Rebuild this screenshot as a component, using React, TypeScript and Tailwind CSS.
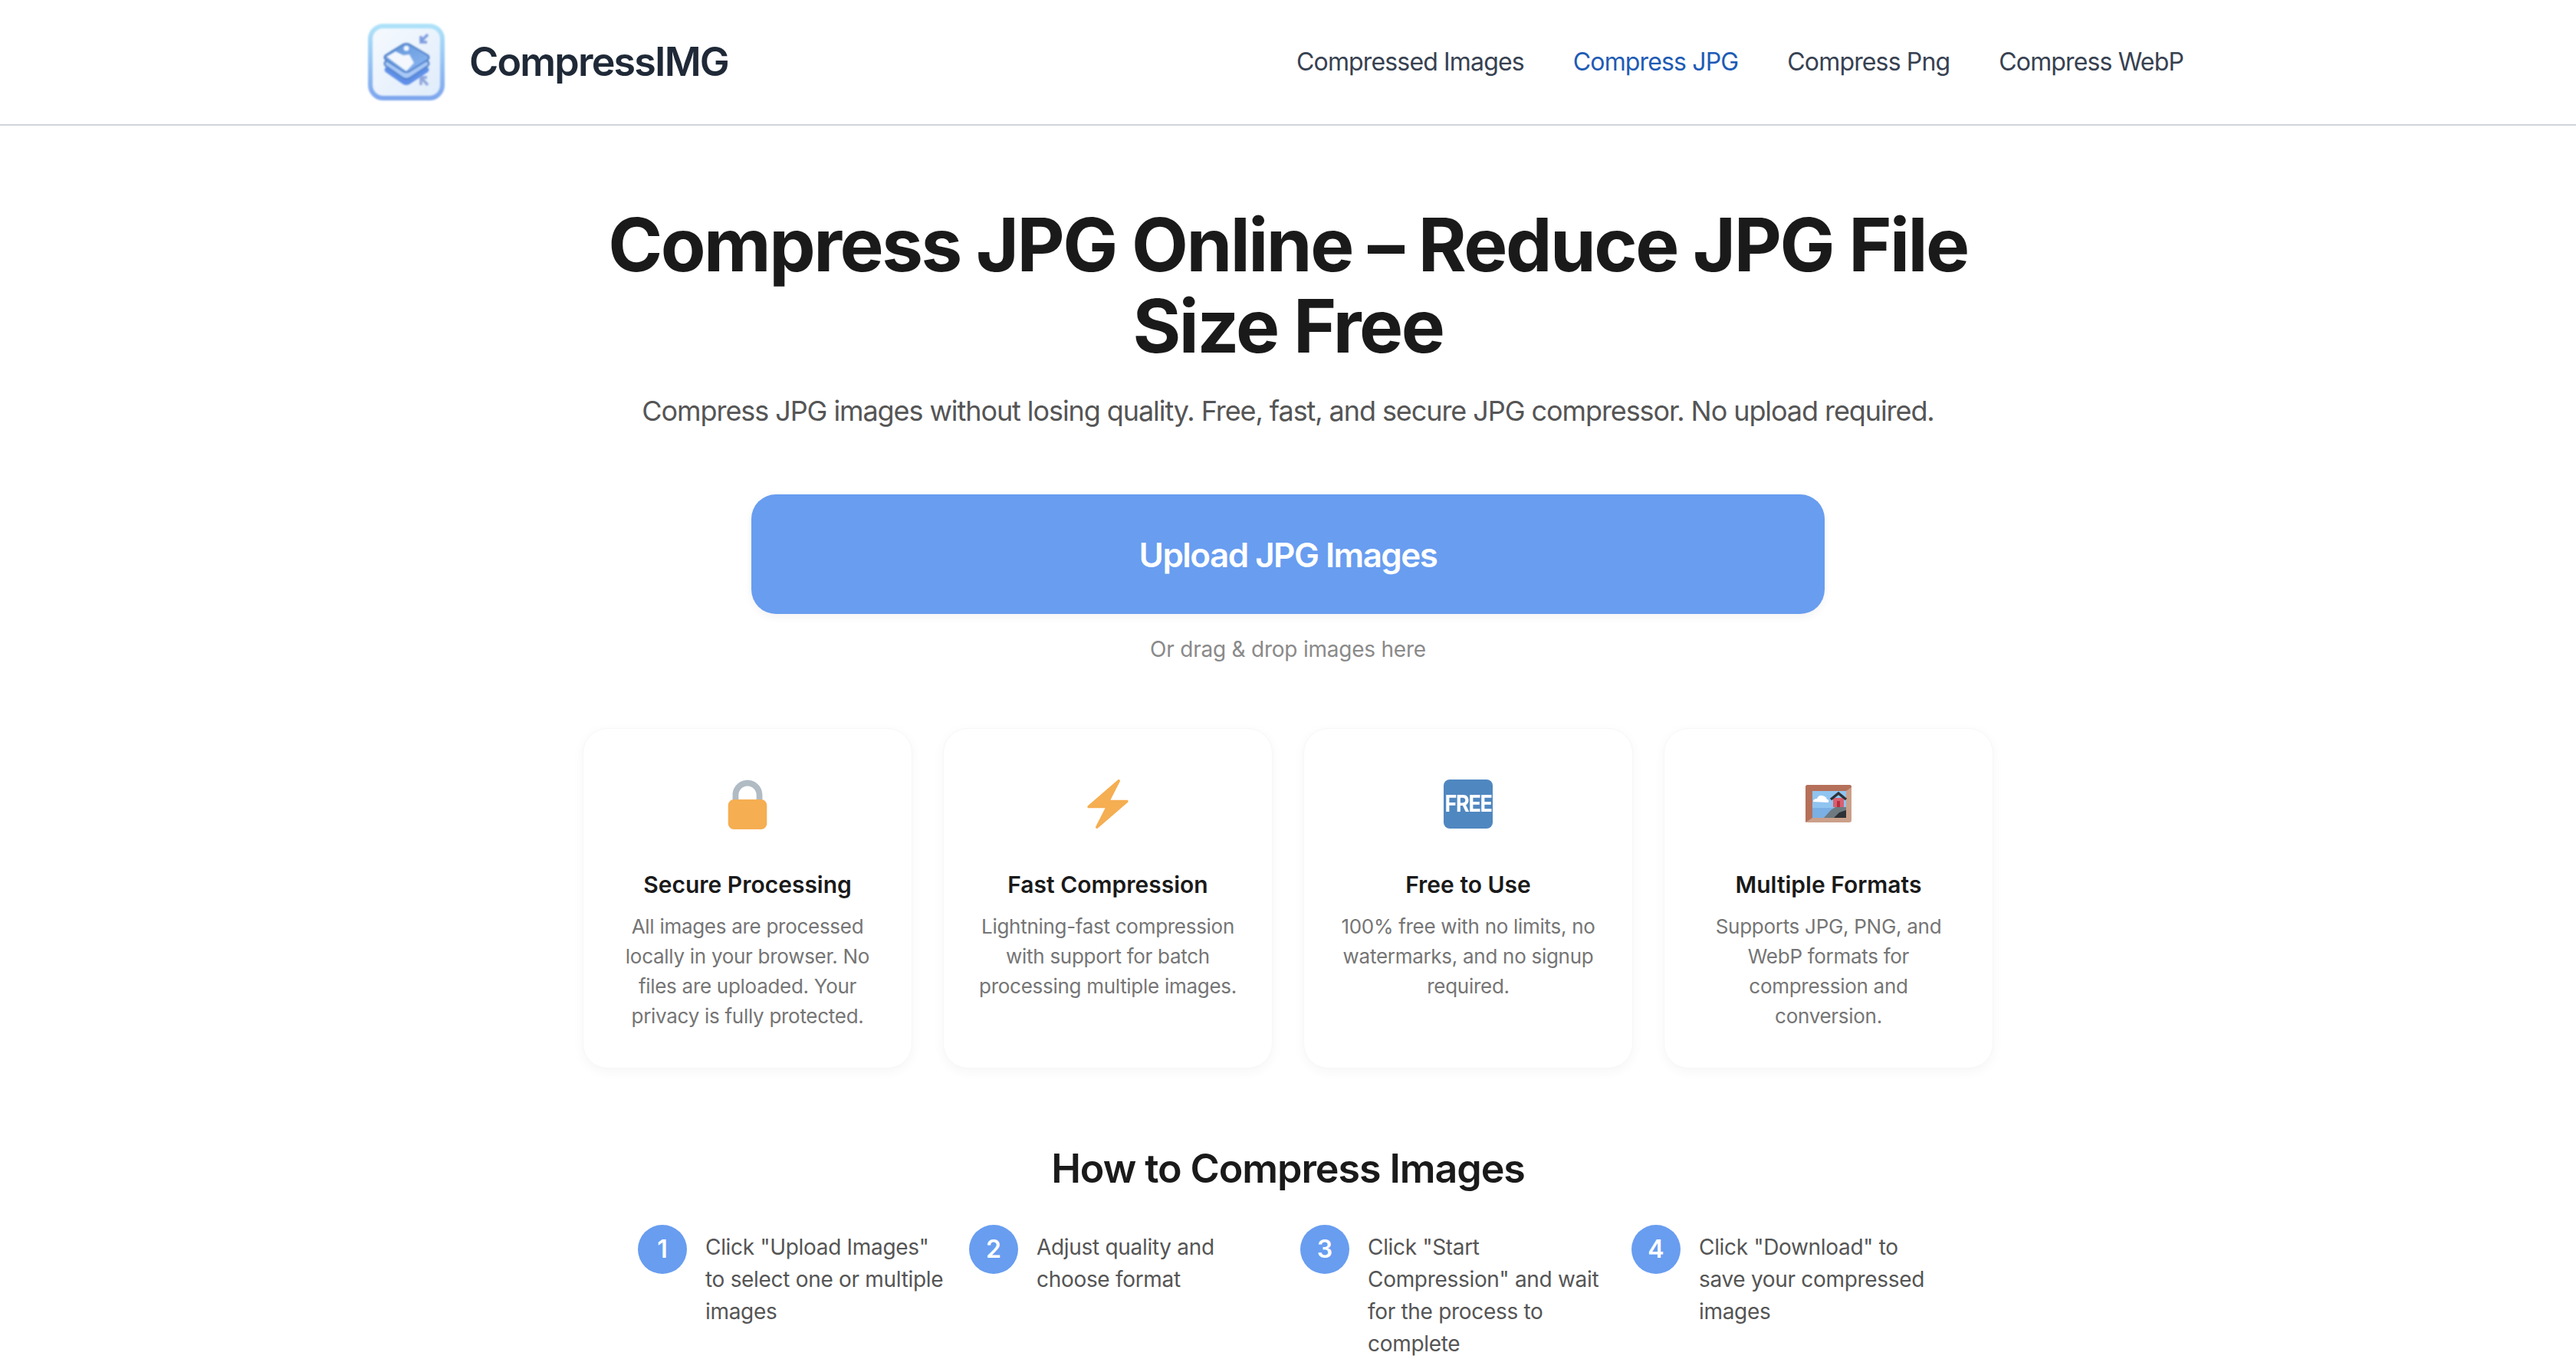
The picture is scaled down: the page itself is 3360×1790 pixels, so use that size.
import type { ReactNode } from "react";

function Logo() {
  return (
    <svg width="100" height="100" viewBox="0 0 100 100" className="shrink-0 blur-[0.8px]">
      <defs>
        <linearGradient id="frame" x1="0" y1="0" x2="0" y2="1">
          <stop offset="0" stopColor="#aee2f9" />
          <stop offset="1" stopColor="#7ea6ee" />
        </linearGradient>
        <linearGradient id="paper" x1="0" y1="0" x2="1" y2="1">
          <stop offset="0" stopColor="#f6fafe" />
          <stop offset="1" stopColor="#dfecfb" />
        </linearGradient>
        <linearGradient id="top" x1="0" y1="0" x2="1" y2="1">
          <stop offset="0" stopColor="#5f93d8" />
          <stop offset="1" stopColor="#8db8f2" />
        </linearGradient>
      </defs>
      <rect x="3" y="3" width="94" height="94" rx="17" fill="url(#paper)" stroke="url(#frame)" strokeWidth="6" />
      <path d="M50 44 L78 57 Q81 60 78 63 L54 79 Q50 81 46 79 L23 63 Q20 60 23 57 Z" fill="#5f8fe8" />
      <path d="M50 36 L78 49 Q81 52 78 55 L54 71 Q50 73 46 71 L23 55 Q20 52 23 49 Z" fill="#a8c8f6" stroke="#4f7fc8" strokeWidth="2" />
      <path d="M46 27 Q50 25 54 27 L78 41 Q81 44 78 47 L54 62 Q50 64 46 62 L23 47 Q20 44 23 41 Z" fill="url(#top)" stroke="#4f7fc8" strokeWidth="2" />
      <path d="M24 43 L36 36 L46 41 L54 40 L60 51 L50 62 Z" fill="#f4f8fe" />
      <circle cx="50" cy="32" r="3.5" fill="#f4f8fe" />
      <path d="M78 14 L69 23 M69 16 V24 H77" stroke="#7f9ce0" strokeWidth="3.5" fill="none" />
      <path d="M69 70 L78 80 M69 80 V70 H77" stroke="#8fa6dc" strokeWidth="3.5" fill="none" />
    </svg>
  );
}

function LockIcon() {
  return (
    <svg width="70" height="70" viewBox="0 0 36 36">
      <path fill="#b0bbc4" d="M18 3C12.477 3 8 7.477 8 13v10h4V13c0-3.313 2.686-6 6-6s6 2.687 6 6v10h4V13c0-5.523-4.477-10-10-10z" />
      <path fill="#f5ae52" d="M31 32c0 2.209-1.791 4-4 4H9c-2.209 0-4-1.791-4-4V20c0-2.209 1.791-4 4-4h18c2.209 0 4 1.791 4 4v12z" />
    </svg>
  );
}

function BoltIcon() {
  return (
    <svg width="64" height="64" viewBox="0 0 36 36" className="mt-[4px]">
      <path
        fill="#f5ae52"
        d="M32.938 15.651C32.792 15.26 32.418 15 32 15H19.925L26.89 1.458c.219-.426.106-.947-.271-1.243C26.437.071 26.218 0 26 0c-.233 0-.466.082-.653.243L18 6.588 3.347 19.243c-.316.273-.43.714-.284 1.105S3.582 21 4 21h12.075L9.11 34.542c-.219.426-.106.947.271 1.243.182.144.401.215.619.215.233 0 .466-.082.653-.243L18 29.412l14.653-12.655c.317-.273.43-.714.285-1.106z"
      />
    </svg>
  );
}

function FreeIcon() {
  return (
    <div className="mt-[4px] flex h-[64px] w-[64px] items-center justify-center rounded-[8px] bg-[#4f87c0] text-[27px] font-bold tracking-[-0.05em] text-white">
      <span className="scale-y-[1.1]">FREE</span>
    </div>
  );
}

function PictureIcon() {
  return (
    <svg width="70" height="70" viewBox="0 0 70 70">
      <rect x="5" y="12" width="60" height="49" rx="3" fill="#cba08a" />
      <path d="M5 15 Q5 12 8 12 H62 Q65 12 65 15 L58 20 H14 V55 L5 61 Z" fill="#b5705a" />
      <rect x="14" y="20" width="44" height="35" fill="#90c4f0" />
      <rect x="14" y="42" width="44" height="13" fill="#7ab0e4" />
      <path d="M15 34 Q15 30 20 30 Q22 25 27 26 Q32 27 33 31 Q36 31 35 35 Z" fill="#ffffff" />
      <path d="M29 55 L38 45 L44 41 H58 V55 Z" fill="#6f7a80" />
      <path d="M42 55 L49 48 L58 45 V55 Z" fill="#2e3236" />
      <rect x="41" y="29" width="14" height="12" fill="#d9606f" />
      <rect x="46" y="33" width="4" height="8" fill="#b52f3f" />
      <path d="M38 31 L48 23 L58 31" fill="none" stroke="#2f3238" strokeWidth="3.5" />
    </svg>
  );
}

const cards: { title: string; text: string; icon: ReactNode }[] = [
  {
    title: "Secure Processing",
    text: "All images are processed locally in your browser. No files are uploaded. Your privacy is fully protected.",
    icon: <LockIcon />,
  },
  {
    title: "Fast Compression",
    text: "Lightning-fast compression with support for batch processing multiple images.",
    icon: <BoltIcon />,
  },
  {
    title: "Free to Use",
    text: "100% free with no limits, no watermarks, and no signup required.",
    icon: <FreeIcon />,
  },
  {
    title: "Multiple Formats",
    text: "Supports JPG, PNG, and WebP formats for compression and conversion.",
    icon: <PictureIcon />,
  },
];

const steps = [
  'Click "Upload Images" to select one or multiple images',
  "Adjust quality and choose format",
  'Click "Start Compression" and wait for the process to complete',
  'Click "Download" to save your compressed images',
];

const navLinks = ["Compressed Images", "Compress JPG", "Compress Png", "Compress WebP"];

export default function App() {
  return (
    <div className="min-h-screen bg-white font-['Inter',sans-serif] text-[#1a1a1a]">
      {/* Header */}
      <header className="border-b-2 border-[#d1d5db] bg-white">
        <div className="mx-auto flex h-[162px] w-[2400px] items-center justify-between">
          <div className="flex items-center gap-[32px]">
            <Logo />
            <span className="text-[52px] font-semibold tracking-[-0.035em] text-[#1f2937]">CompressIMG</span>
          </div>
          <nav className="flex">
            {navLinks.map((link) => (
              <a
                key={link}
                className={
                  link === "Compress JPG"
                    ? "px-[32px] text-[32px] tracking-[-0.0265em] text-[#1e5bb5]"
                    : "px-[32px] text-[32px] tracking-[-0.0265em] text-[#374151]"
                }
              >
                {link}
              </a>
            ))}
          </nav>
        </div>
      </header>

      {/* Hero */}
      <main className="flex flex-col items-center pt-[102px]">
        <h1 className="w-[1900px] text-center text-[96px] leading-[106px] font-bold tracking-[-0.026em] text-[#1a1a1a]">
          Compress JPG Online – Reduce JPG File Size Free
        </h1>
        <p className="mt-[31px] text-[36px] leading-[54px] tracking-[-0.03em] text-[#555555]">
          Compress JPG images without losing quality. Free, fast, and secure JPG compressor. No upload required.
        </p>

        <button className="mt-[82px] flex h-[156px] w-[1400px] items-center justify-center rounded-[32px] bg-[#689df0] pt-[2px] text-[44px] font-semibold tracking-[-0.035em] text-white shadow-[0_4px_12px_rgba(0,0,0,0.05)]">
          Upload JPG Images
        </button>
        <p className="mt-[25px] text-[28px] leading-[42px] tracking-[-0.008em] text-[#8a8a8a]">Or drag &amp; drop images here</p>

        {/* Feature cards */}
        <div className="mt-[82px] grid w-[1840px] grid-cols-4 gap-[40px]">
          {cards.map((card) => (
            <div
              key={card.title}
              className="flex h-[444px] flex-col items-center rounded-[32px] border border-[#f7f7f7] bg-white px-[40px] pt-[48px] text-center shadow-[0_4px_16px_rgba(0,0,0,0.04)]"
            >
              <div className="flex h-[96px] items-center justify-center">{card.icon}</div>
              <h3 className="mt-[37px] text-[30px] leading-[44px] font-semibold text-[#1a1a1a]">{card.title}</h3>
              <p className="mt-[13px] text-[26px] leading-[39px] tracking-[-0.011em] text-[#757575]">{card.text}</p>
            </div>
          ))}
        </div>

        {/* Steps */}
        <h2 className="mt-[100px] text-[52px] leading-[62px] font-semibold tracking-[-0.021em] text-[#1a1a1a]">How to Compress Images</h2>
        <div className="mt-[42px] grid w-[1696px] grid-cols-4 gap-[32px]">
          {steps.map((step, i) => (
            <div key={step} className="flex gap-[24px]">
              <div className="flex h-[64px] w-[64px] shrink-0 items-center justify-center rounded-full bg-[#689df0] text-[32px] font-semibold text-white">
                {i + 1}
              </div>
              <p className="pt-[8px] text-[28px] leading-[42px] tracking-[-0.011em] text-[#555555]">{step}</p>
            </div>
          ))}
        </div>
      </main>
    </div>
  );
}
